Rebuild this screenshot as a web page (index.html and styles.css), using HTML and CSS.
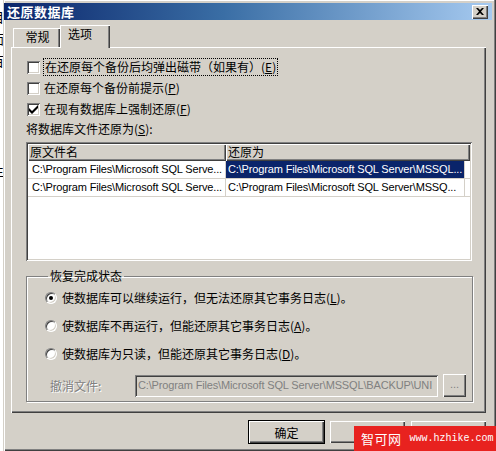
FILE: index.html
```html
<!DOCTYPE html>
<html lang="zh-CN">
<head>
    <meta charset="UTF-8">
    <title>还原数据库</title>
    <link rel="stylesheet" href="styles.css">
</head>
<body>
    <div class="behind">
        <span>目</span><span>面</span><span>百</span><span>x</span><span>c</span><span>e</span><span>c</span><span>生</span><span>I</span><span>E</span>
    </div>
    <div class="dialog">
        <div class="titlebar">
            <span class="title">还原数据库</span>
            <button class="close">
                <svg width="8" height="7" viewBox="0 0 8 7"><path d="M0 0h2l2 2 2-2h2L5 3.5 8 7H6L4 5 2 7H0l3-3.5z" fill="#000"/></svg>
            </button>
        </div>

        <div class="tabs">
            <div class="tab">常规</div>
            <div class="tab active">选项</div>
        </div>

        <div class="panel">
            <div class="check-row">
                <span class="checkbox"></span>
                <span class="label focus">在还原每个备份后均弹出磁带（如果有）(<u>E</u>)</span>
            </div>
            <div class="check-row">
                <span class="checkbox"></span>
                <span class="label">在还原每个备份前提示(<u>P</u>)</span>
            </div>
            <div class="check-row">
                <span class="checkbox">
                    <svg width="9" height="9" viewBox="0 0 9 9"><path d="M0 3v3l3 3 6-6V0L3 6z" fill="#000"/></svg>
                </span>
                <span class="label">在现有数据库上强制还原(<u>F</u>)</span>
            </div>

            <div class="field-label">将数据库文件还原为(<u>S</u>):</div>

            <div class="list">
                <div class="list-head">
                    <div class="col col-a">原文件名</div>
                    <div class="col col-b">还原为</div>
                </div>
                <div class="list-row">
                    <div class="cell col-a">C:\Program Files\Microsoft SQL Serve...</div>
                    <div class="cell col-b selected">C:\Program Files\Microsoft SQL Server\MSSQL...</div>
                </div>
                <div class="list-row">
                    <div class="cell col-a">C:\Program Files\Microsoft SQL Serve...</div>
                    <div class="cell col-b">C:\Program Files\Microsoft SQL Server\MSSQ...</div>
                </div>
            </div>

            <fieldset class="group">
                <legend>恢复完成状态</legend>
                <div class="radio-row">
                    <span class="radio checked"></span>
                    <span class="label">使数据库可以继续运行，但无法还原其它事务日志(<u>L</u>)｡</span>
                </div>
                <div class="radio-row">
                    <span class="radio"></span>
                    <span class="label">使数据库不再运行，但能还原其它事务日志(<u>A</u>)｡</span>
                </div>
                <div class="radio-row">
                    <span class="radio"></span>
                    <span class="label">使数据库为只读，但能还原其它事务日志(<u>D</u>)｡</span>
                </div>
                <div class="undo-row">
                    <span class="disabled-label">撤消文件:</span>
                    <div class="textbox">C:\Program Files\Microsoft SQL Server\MSSQL\BACKUP\UNI</div>
                    <button class="browse">...</button>
                </div>
            </fieldset>
        </div>

        <div class="buttons">
            <button class="btn default">确定</button>
            <button class="btn">取消</button>
            <button class="btn">帮助</button>
        </div>

        <div class="watermark">
            <span class="wm-cn">智可网</span>
            <span class="wm-url">www.hzhike.com</span>
        </div>
    </div>
</body>
</html>
```

FILE: styles.css
```css
body {
    margin: 0;
    width: 496px;
    height: 451px;
    overflow: hidden;
    display: flex;
    background: #d4d0c8;
    font-family: "Noto Sans CJK SC", "Liberation Sans", sans-serif;
    font-size: 12px;
    color: #000;
}

.behind {
    width: 3px;
    background: #fff;
    overflow: hidden;
    display: flex;
    flex-direction: column;
    align-items: flex-end;
    padding-top: 10px;
    gap: 8px;
}

.behind span {
    display: block;
    width: 12px;
    margin-left: -9px;
    font-size: 13px;
    line-height: 14px;
    color: #000;
}

.dialog {
    flex: 1;
    position: relative;
    padding-top: 3px;
    border-left: 1px solid #d4d0c8;
    box-shadow: inset 1px 0 #fff, inset -1px -1px #404040, inset -2px -2px #808080, inset 0 1px #fff;
}

.titlebar {
    height: 17px;
    margin-right: 4px;
    display: flex;
    align-items: center;
    justify-content: space-between;
    background: linear-gradient(to right, #0a246a, #3a6ea5 45%, #a6caf0);
}

.title {
    color: #fff;
    font-weight: bold;
    font-size: 13px;
    padding-left: 3px;
    letter-spacing: 0.5px;
}

.close {
    width: 16px;
    height: 14px;
    margin-right: 4px;
    padding: 0;
    border: none;
    background: #d4d0c8;
    box-shadow: inset 1px 1px #fff, inset -1px -1px #404040, inset -2px -2px #808080;
    display: flex;
    align-items: center;
    justify-content: center;
}

.tabs {
    display: flex;
    align-items: flex-end;
    margin-top: 5px;
    padding-left: 9px;
    height: 22px;
    position: relative;
    z-index: 1;
}

.tab {
    width: 47px;
    height: 19px;
    line-height: 18px;
    padding-left: 2px;
    text-align: center;
    background: #d4d0c8;
    box-shadow: inset 1px 1px #fff, inset -1px 0 #404040, inset -2px 0 #808080;
    box-sizing: border-box;
}

.tab.active {
    width: 50px;
    height: 23px;
    line-height: 18px;
    margin-bottom: -1px;
    text-align: left;
    padding-left: 8px;
}

.panel {
    width: 475px;
    height: 366px;
    margin-left: 7px;
    box-sizing: border-box;
    padding: 12px 0 0 16px;
    box-shadow: inset 1px 1px #fff, inset -1px -1px #404040, inset -2px -2px #808080;
}

.check-row {
    height: 16px;
    display: flex;
    align-items: center;
    gap: 4px;
    margin-bottom: 5px;
}

.checkbox {
    width: 13px;
    height: 13px;
    background: #fff;
    box-sizing: border-box;
    box-shadow: inset 1px 1px #808080, inset -1px -1px #fff, inset 2px 2px #404040, inset -2px -2px #d4d0c8;
    display: flex;
    align-items: center;
    justify-content: center;
    flex: none;
}

.label {
    line-height: 16px;
    white-space: nowrap;
}

.label.focus {
    outline: 1px dotted #000;
    outline-offset: 0;
    padding: 0 1px;
}

.field-label {
    height: 16px;
    line-height: 16px;
    margin-top: -1px;
    margin-left: -1px;
}

.list {
    width: 446px;
    height: 119px;
    margin-top: 5px;
    margin-left: -1px;
    background: #fff;
    box-sizing: border-box;
    padding: 2px;
    box-shadow: inset 1px 1px #808080, inset -1px -1px #fff, inset 2px 2px #404040, inset -2px -2px #d4d0c8;
    font-family: "Liberation Sans", "Noto Sans CJK SC", sans-serif;
    font-size: 11px;
    letter-spacing: -0.15px;
}

.list-head {
    display: flex;
    height: 17px;
}

.col {
    height: 17px;
    line-height: 16px;
    background: #d4d0c8;
    box-sizing: border-box;
    padding-left: 2px;
    box-shadow: inset 1px 1px #fff, inset -1px -1px #404040, inset -2px -2px #808080;
    font-family: "Noto Sans CJK SC", sans-serif;
    font-size: 12px;
    letter-spacing: 0;
}

.col-a {
    width: 198px;
    flex: none;
}

.col-b {
    flex: 1;
}

.list-row {
    display: flex;
    height: 18px;
    border-bottom: 1px solid #d4d0c8;
    box-sizing: border-box;
}

.cell {
    line-height: 17px;
    padding-left: 4px;
    white-space: nowrap;
    overflow: hidden;
    border-right: 1px solid #d4d0c8;
    box-sizing: border-box;
}

.cell.col-b {
    padding-left: 2px;
    width: 239px;
    flex: none;
}

.cell.selected {
    background: #0a246a;
    color: #fff;
}

.group {
    width: 447px;
    height: 133px;
    margin: 8px 0 0 -1px;
    padding: 7px 0 0 18px;
    box-sizing: border-box;
    border: 1px solid #808080;
    box-shadow: 1px 1px #fff, inset 1px 1px #fff;
}

.group legend {
    padding: 0 2px;
    margin-left: 3px;
    line-height: 14px;
}

.radio-row {
    height: 16px;
    display: flex;
    align-items: center;
    gap: 5px;
    margin-bottom: 12px;
}

.radio {
    width: 12px;
    height: 12px;
    border-radius: 50%;
    box-sizing: border-box;
    background: #fff;
    border: 1px solid;
    border-color: #808080 #fff #fff #808080;
    box-shadow: inset 1px 1px #404040, inset -1px -1px #d4d0c8;
    position: relative;
    flex: none;
}

.radio.checked::after {
    content: "";
    position: absolute;
    left: 3px;
    top: 3px;
    width: 4px;
    height: 4px;
    border-radius: 50%;
    background: #000;
}

.undo-row {
    display: flex;
    align-items: center;
    margin-top: 3px;
}

.disabled-label {
    width: 85px;
    padding-left: 5px;
    color: #808080;
    text-shadow: 1px 1px #fff;
    flex: none;
}

.textbox {
    width: 303px;
    height: 22px;
    line-height: 21px;
    box-sizing: border-box;
    padding-left: 3px;
    white-space: nowrap;
    overflow: hidden;
    color: #808080;
    background: #d4d0c8;
    box-shadow: inset 1px 1px #808080, inset -1px -1px #fff, inset 2px 2px #404040, inset -2px -2px #d4d0c8;
    font-family: "Liberation Sans", sans-serif;
    font-size: 11px;
    letter-spacing: -0.15px;
}

.browse {
    width: 23px;
    height: 23px;
    margin-left: 5px;
    padding: 0 0 4px;
    border: none;
    background: #d4d0c8;
    color: #808080;
    font-size: 11px;
    box-shadow: inset 1px 1px #fff, inset -1px -1px #404040, inset -2px -2px #808080;
}

.buttons {
    display: flex;
    justify-content: flex-end;
    gap: 6px;
    width: 482px;
    margin-top: 8px;
}

.btn {
    width: 75px;
    height: 22px;
    padding: 0;
    border: none;
    background: #d4d0c8;
    font-family: "Noto Sans CJK SC", sans-serif;
    font-size: 12px;
    color: #000;
    box-shadow: inset 1px 1px #fff, inset -1px -1px #404040, inset -2px -2px #808080;
}

.btn.default {
    box-shadow: 0 0 0 1px #000, inset 1px 1px #fff, inset -1px -1px #404040, inset -2px -2px #808080;
}

.watermark {
    position: absolute;
    right: 0;
    bottom: 0;
    width: 142px;
    height: 25px;
    background: #e8221f;
    color: #fff;
    display: flex;
    align-items: center;
    gap: 8px;
    padding-left: 7px;
    box-sizing: border-box;
    white-space: nowrap;
}

.wm-cn {
    font-size: 13px;
    line-height: 16px;
    letter-spacing: 0.5px;
}

.wm-url {
    font-family: "Liberation Mono", monospace;
    font-size: 10px;
}
```
